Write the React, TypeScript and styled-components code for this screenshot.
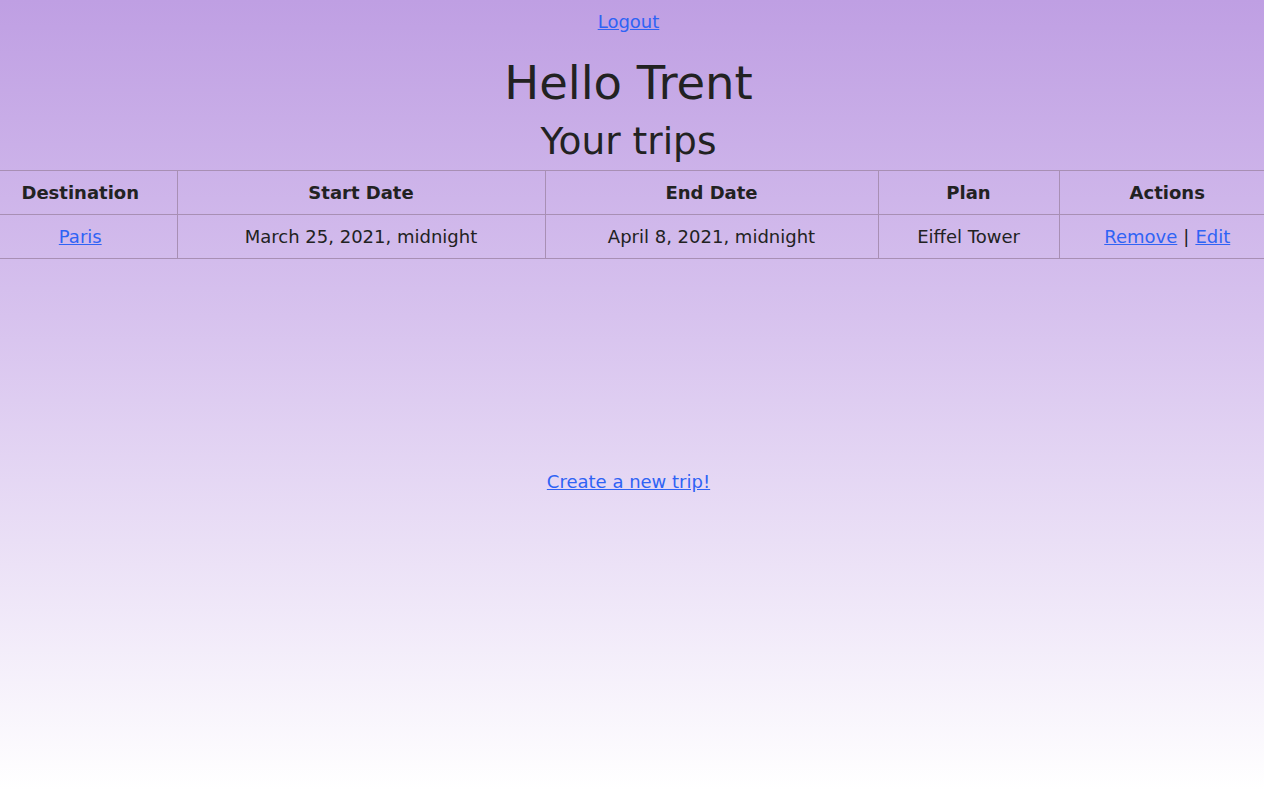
import React from "react";
import styled, { createGlobalStyle } from "styled-components";

const GlobalStyle = createGlobalStyle`
  html, body {
    margin: 0;
    padding: 0;
    min-height: 100%;
    overflow-x: hidden;
  }
  body {
    font-family: "DejaVu Sans", Verdana, sans-serif;
    color: #222222;
    background: linear-gradient(180deg, #bf9fe3 0%, #d7c2ee 40%, #ffffff 100%);
    background-attachment: fixed;
    min-height: 790px;
  }
`;

const Page = styled.div`
  min-height: 790px;
  padding-right: 7px;
  display: flex;
  flex-direction: column;
  align-items: center;
`;

const Link = styled.a`
  color: #2f63f5;
  text-decoration: underline;
  font-size: 18px;
  cursor: pointer;
`;

const TopBar = styled.div`
  padding-top: 11px;
  line-height: 22px;
`;

const Title = styled.h1`
  margin: 21px 0 0;
  font-size: 46.5px;
  font-weight: 400;
  line-height: 56px;
`;

const Subtitle = styled.h2`
  margin: 6px 0 0;
  font-size: 37.5px;
  font-weight: 400;
  line-height: 48px;
`;

const Table = styled.table`
  align-self: flex-start;
  width: 1291px;
  margin: 5px 0 0 -16px;
  border-collapse: collapse;
  table-layout: fixed;
  font-size: 18px;
`;

const Col = styled.col<{ $w: number }>`
  width: ${(p) => p.$w}px;
`;

const Cell = styled.td<{ $head?: boolean }>`
  border: 1px solid #a88fb4;
  height: 43px;
  padding: 0 8px;
  text-align: center;
  font-weight: ${(p) => (p.$head ? 700 : 400)};
  &:first-child { border-left: none; }
  &:last-child { border-right: none; }
`;

const Sep = styled.span`
  margin: 0 6px;
`;

const Footer = styled.div`
  margin-top: 212px;
`;

const widths = [193, 368, 333, 181, 216];

export default function App() {
  return (
    <Page>
      <GlobalStyle />
      <TopBar>
        <Link>Logout</Link>
      </TopBar>
      <Title>Hello Trent</Title>
      <Subtitle>Your trips</Subtitle>
      <Table>
        <colgroup>
          {widths.map((w, i) => (
            <Col key={i} $w={w} />
          ))}
        </colgroup>
        <thead>
          <tr>
            <Cell as="th" $head>Destination</Cell>
            <Cell as="th" $head>Start Date</Cell>
            <Cell as="th" $head>End Date</Cell>
            <Cell as="th" $head>Plan</Cell>
            <Cell as="th" $head>Actions</Cell>
          </tr>
        </thead>
        <tbody>
          <tr>
            <Cell><Link>Paris</Link></Cell>
            <Cell>March 25, 2021, midnight</Cell>
            <Cell>April 8, 2021, midnight</Cell>
            <Cell>Eiffel Tower</Cell>
            <Cell>
              <Link>Remove</Link>
              <Sep>|</Sep>
              <Link>Edit</Link>
            </Cell>
          </tr>
        </tbody>
      </Table>
      <Footer>
        <Link>Create a new trip!</Link>
      </Footer>
    </Page>
  );
}
